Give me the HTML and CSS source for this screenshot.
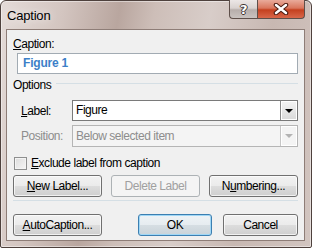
FILE: index.html
```html
<!DOCTYPE html>
<html lang="en">
<head>
    <meta charset="UTF-8">
    <meta name="viewport" content="width=device-width, initial-scale=1.0">
    <title>Caption</title>
    <link rel="stylesheet" href="styles.css">
</head>
<body>
    <div class="window">
        <div class="titlebar">
            <span class="title">Caption</span>
            <div class="caption-buttons">
                <div class="cbtn help"><span class="qmark">?</span></div>
                <div class="cbtn close">
                    <svg width="16" height="12" viewBox="0 0 16 12">
                        <path d="M3 2 L13 10 M13 2 L3 10" stroke="#4a1a10" stroke-width="4.5" stroke-linecap="round"/>
                        <path d="M3 2 L13 10 M13 2 L3 10" stroke="#fff" stroke-width="2.5" stroke-linecap="round"/>
                    </svg>
                </div>
            </div>
        </div>

        <div class="client">
            <div class="field-label"><u>C</u>aption:</div>
            <div class="textbox">Figure 1</div>

            <div class="group-head">
                <span>Options</span>
                <span class="group-line"></span>
            </div>

            <div class="row">
                <span class="row-label"><u>L</u>abel:</span>
                <div class="combo">
                    <span class="combo-text">Figure</span>
                    <span class="combo-btn"><span class="arrow"></span></span>
                </div>
            </div>
            <div class="row disabled">
                <span class="row-label">Position:</span>
                <div class="combo">
                    <span class="combo-text">Below selected item</span>
                    <span class="combo-btn"><span class="arrow"></span></span>
                </div>
            </div>

            <label class="check">
                <span class="box"></span>
                <span><u>E</u>xclude label from caption</span>
            </label>

            <div class="btn-row">
                <button class="btn"><u>N</u>ew Label...</button>
                <button class="btn" disabled>Delete Label</button>
                <button class="btn">N<u>u</u>mbering...</button>
            </div>

            <div class="separator"></div>

            <div class="btn-row bottom">
                <button class="btn"><u>A</u>utoCaption...</button>
                <span class="spacer"></span>
                <button class="btn default">OK</button>
                <button class="btn">Cancel</button>
            </div>
        </div>
    </div>
</body>
</html>
```

FILE: styles.css
```css
body {
    margin: 0;
    background: #fff;
    font-family: "Liberation Sans", Arial, sans-serif;
    font-size: 12px;
    letter-spacing: -0.45px;
    color: #000;
}
.window {
    width: 312px;
    height: 248px;
    box-sizing: border-box;
    border: 1px solid #4e413d;
    border-radius: 6px 6px 2px 2px;
    padding: 0 6px 6px 5px;
    display: flex;
    flex-direction: column;
    background: linear-gradient(100deg, #e4dbd8 0%, #d3c5c0 18%, #b9a69f 34%, #cdbeb8 44%, #d8cdc9 60%, #c8b8b2 78%, #d2c5c0 100%);
    box-shadow: inset 0 0 0 1px rgba(255,255,255,0.45);
}
.titlebar {
    height: 28px;
    display: flex;
    justify-content: space-between;
    align-items: flex-start;
}
.title {
    font-size: 13px;
    letter-spacing: -0.2px;
    margin: 7px 0 0 1px;
    color: #000;
    text-shadow: 0 0 8px rgba(255,255,255,0.9);
}
.caption-buttons {
    display: flex;
    margin-top: -1px;
}
.cbtn {
    height: 19px;
    box-sizing: border-box;
    border: 1px solid #5e4f4a;
    border-top: none;
    display: flex;
    align-items: center;
    justify-content: center;
}
.help {
    width: 28px;
    border-radius: 0 0 0 4px;
    border-right: none;
    background: linear-gradient(#ece7e6 0%, #d9d2d0 45%, #b7aeab 55%, #c9c2bf 100%);
}
.qmark {
    font-family: "DejaVu Sans", sans-serif;
    font-weight: bold;
    font-size: 13px;
    color: #fff;
    line-height: 1;
    text-shadow: -1px 0 #3d3431, 1px 0 #3d3431, 0 -1px #3d3431, 0 1px #3d3431;
}
.close {
    width: 48px;
    border-radius: 0 0 4px 0;
    background: linear-gradient(#e9ab9b 0%, #d9765d 45%, #c4401f 55%, #d8674a 100%);
}
.client {
    flex: 1;
    background: #f0f0f0;
    border: 1px solid #8e7d77;
    padding: 0 6px 0 6px;
    display: flex;
    flex-direction: column;
}
u {
    text-decoration: underline;
    text-underline-offset: 1px;
}
.field-label {
    margin-top: 6px;
    height: 16px;
    line-height: 16px;
}
.textbox {
    margin: 1px 0 0 4px;
    height: 21px;
    box-sizing: border-box;
    border: 1px solid #a2abb3;
    background: #fff;
    color: #3c7fc8;
    font-weight: bold;
    letter-spacing: -0.2px;
    padding-left: 5px;
    line-height: 19px;
}
.group-head {
    margin-top: 3px;
    height: 16px;
    display: flex;
    align-items: center;
    gap: 5px;
}
.group-line {
    flex: 1;
    height: 1px;
    background: #d5dfe5;
    margin-top: -3px;
}
.row {
    display: flex;
    align-items: center;
    margin-top: 7px;
    padding-left: 8px;
}
.row + .row {
    margin-top: 4px;
}
.row-label {
    width: 51px;
}
.combo {
    flex: 1;
    height: 21px;
    box-sizing: border-box;
    border: 1px solid #7a7a7a;
    background: #fff;
    display: flex;
    align-items: stretch;
}
.combo-text {
    flex: 1;
    padding-left: 3px;
    line-height: 19px;
}
.combo-btn {
    width: 16px;
    border-left: 1px solid #8a8a8a;
    background: linear-gradient(#f4f4f4, #d9d9d9);
    box-shadow: inset 0 0 0 1px #fff;
    display: flex;
    align-items: center;
    justify-content: center;
}
.arrow {
    width: 0;
    height: 0;
    border-left: 4px solid transparent;
    border-right: 4px solid transparent;
    border-top: 4px solid #000;
}
.row.disabled {
    color: #8d8d8d;
}
.row.disabled .combo {
    height: 22px;
    border-color: #b5b5b5;
    background: #f4f4f4;
}
.row.disabled .combo-text {
    line-height: 20px;
}
.row.disabled .combo-btn {
    border-left-color: #c6c6c6;
    background: #f4f4f4;
}
.row.disabled .arrow {
    border-top-color: #b3b3b3;
}
.check {
    display: flex;
    align-items: center;
    gap: 4px;
    margin: 9px 0 0 1px;
    height: 14px;
}
.box {
    width: 11px;
    height: 11px;
    border: 1px solid #8e8f8f;
    background: linear-gradient(135deg, #dcdcdc, #f6f6f6);
    box-shadow: inset 0 0 0 1px #f4f4f4;
}
.btn-row {
    display: flex;
    justify-content: space-between;
    margin-top: 5px;
}
.btn {
    width: 89px;
    height: 22px;
    box-sizing: border-box;
    font: inherit;
    letter-spacing: inherit;
    color: #000;
    border: 1px solid #707070;
    border-radius: 3px;
    background: linear-gradient(#f2f2f2 0%, #ebebeb 49%, #dddddd 50%, #cfcfcf 100%);
    box-shadow: inset 0 0 0 1px rgba(255,255,255,0.7);
    padding: 0;
}
.btn:disabled {
    color: #a0a0a0;
    border-color: #adb2b5;
    background: #f4f4f4;
    box-shadow: none;
}
.separator {
    height: 1px;
    background: #d5dfe5;
    margin-top: 3px;
}
.btn-row.bottom {
    margin-top: 13px;
    gap: 11px;
}
.spacer {
    flex: 1;
}
.btn-row.bottom .btn.default {
    width: 74px;
    border-color: #3c7fb1;
    box-shadow: inset 0 0 0 1px #9fd7f6;
    background: linear-gradient(#eef3f6 0%, #e6ecf0 49%, #d6dee3 50%, #c9d3d9 100%);
}
.btn-row.bottom .btn:last-child {
    width: 75px;
}
```
